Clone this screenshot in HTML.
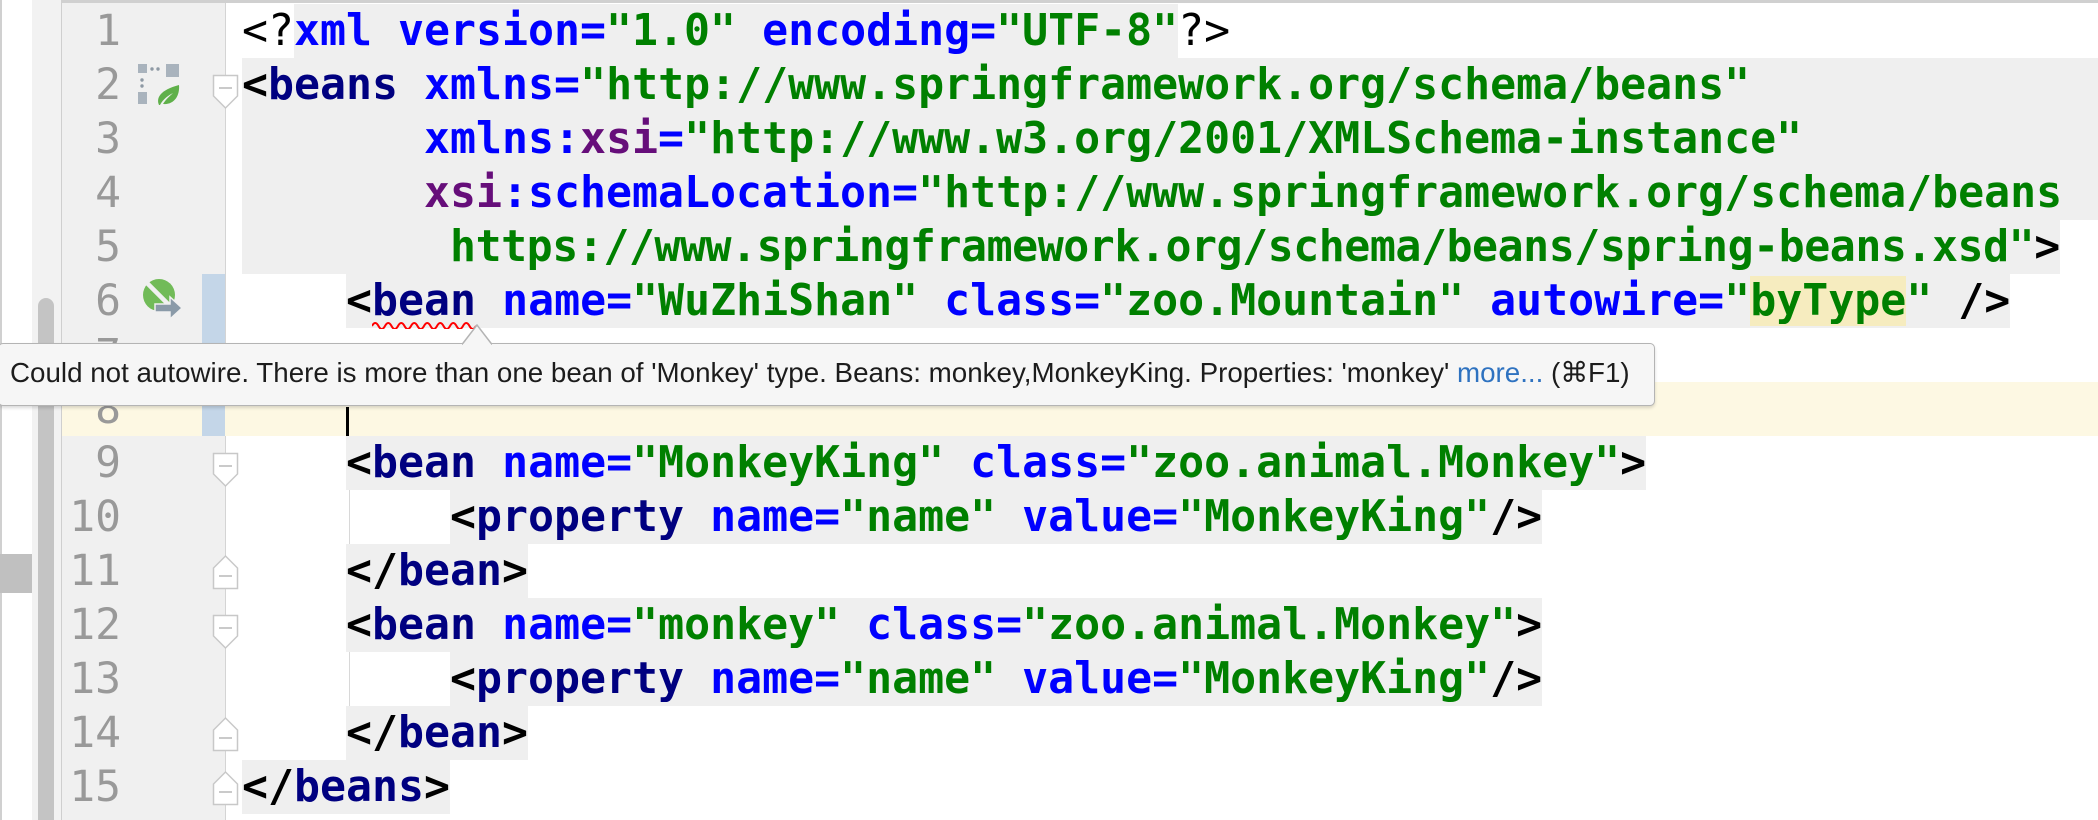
<!DOCTYPE html>
<html><head><meta charset="utf-8">
<style>
html,body{margin:0;padding:0}
body{width:2098px;height:820px;overflow:hidden;background:#fff;position:relative;font-family:"DejaVu Sans Mono","Liberation Mono",monospace}
.abs{position:absolute}
.ln{position:absolute;left:62px;width:59px;text-align:right;font-size:43px;line-height:54px;color:#999;font-family:"DejaVu Sans Mono",monospace}
.code{position:absolute;left:242px;font-size:43.2px;line-height:54px;height:54px;white-space:pre;font-weight:bold;color:#000}
.g{background:#efefef;display:inline-block;height:54px;vertical-align:top}
.t{color:#000080}.a{color:#0000ff}.v{color:#008000}.p{color:#660e7a}
.fold{position:absolute;left:212px}
</style></head><body>
<div class="abs" style="left:0;top:0;width:2px;height:820px;background:#d0d0d0"></div>
<div class="abs" style="left:32px;top:0;width:29px;height:820px;background:#f2f2f2"></div>
<div class="abs" style="left:38px;top:298px;width:16px;height:522px;background:#c4c4c4;border-radius:8px 8px 0 0"></div>
<div class="abs" style="left:0;top:554px;width:32px;height:39px;background:#c0c0c0"></div>
<div class="abs" style="left:61px;top:0;width:164px;height:820px;background:#f0f0f0;border-left:1px solid #cfcfcf"></div>
<div class="abs" style="left:225px;top:0;width:1px;height:820px;background:#d4d4d4"></div>
<div class="abs" style="left:61px;top:0;width:2037px;height:3px;background:#d0d0d0"></div>
<div class="abs" style="left:62px;top:382px;width:2036px;height:54px;background:#fdf8e3"></div>
<div class="abs" style="left:202px;top:274px;width:23px;height:162px;background:#c4d6e8"></div>
<div class="abs" style="left:242px;top:58px;width:1856px;height:162px;background:#efefef"></div>
<div class="abs" style="left:349px;top:490px;width:1px;height:54px;background:#d8d8d8"></div>
<div class="abs" style="left:349px;top:652px;width:1px;height:54px;background:#d8d8d8"></div>

<div class="ln" style="top:4px">1</div>
<div class="ln" style="top:58px">2</div>
<div class="ln" style="top:112px">3</div>
<div class="ln" style="top:166px">4</div>
<div class="ln" style="top:220px">5</div>
<div class="ln" style="top:274px">6</div>
<div class="ln" style="top:328px">7</div>
<div class="ln" style="top:382px">8</div>
<div class="ln" style="top:436px">9</div>
<div class="ln" style="top:490px">10</div>
<div class="ln" style="top:544px">11</div>
<div class="ln" style="top:598px">12</div>
<div class="ln" style="top:652px">13</div>
<div class="ln" style="top:706px">14</div>
<div class="ln" style="top:760px">15</div>

<svg class="abs" style="left:136px;top:62px" width="46" height="46" viewBox="0 0 46 46">
<rect x="2" y="2" width="9" height="9" fill="#a9b3bd"/><rect x="30" y="2" width="13" height="13" fill="#a9b3bd"/>
<rect x="2" y="30" width="9" height="12" fill="#a9b3bd"/>
<circle cx="16" cy="7" r="1.7" fill="#8e99a4"/><circle cx="22" cy="7" r="1.7" fill="#8e99a4"/>
<circle cx="6" cy="18" r="1.7" fill="#8e99a4"/><circle cx="6" cy="24" r="1.7" fill="#8e99a4"/>
<path d="M23 43 C20 36 24 28 43 23 C44 34 38 43 27 42 C30 37 34 34 37 31 C33 33 27 37 24 43 Z" fill="#5fb04a"/>
</svg>
<svg class="abs" style="left:140px;top:278px" width="46" height="46" viewBox="0 0 46 46">
<circle cx="19" cy="17" r="16" fill="#71bb58"/>
<path d="M7 5 L31 29" stroke="#f0f0f0" stroke-width="4.5"/>
<path d="M15 26 L30 26 L30 19 L42 30 L30 41 L30 34 L15 34 Z" fill="#8a9aa8" stroke="#f0f0f0" stroke-width="1.5"/>
</svg>

<svg class="fold" style="top:74px" width="28" height="36" viewBox="0 0 28 36"><path d="M1.5 1.5 H25.5 V22 L13.5 34 L1.5 22 Z" fill="#fff" stroke="#c8c8c8" stroke-width="1.5"/><path d="M7 14 H20" stroke="#b8b8b8" stroke-width="1.5"/></svg>
<svg class="fold" style="top:452px" width="28" height="36" viewBox="0 0 28 36"><path d="M1.5 1.5 H25.5 V22 L13.5 34 L1.5 22 Z" fill="#fff" stroke="#c8c8c8" stroke-width="1.5"/><path d="M7 14 H20" stroke="#b8b8b8" stroke-width="1.5"/></svg>
<svg class="fold" style="top:614px" width="28" height="36" viewBox="0 0 28 36"><path d="M1.5 1.5 H25.5 V22 L13.5 34 L1.5 22 Z" fill="#fff" stroke="#c8c8c8" stroke-width="1.5"/><path d="M7 14 H20" stroke="#b8b8b8" stroke-width="1.5"/></svg>
<svg class="fold" style="top:554px" width="28" height="36" viewBox="0 0 28 36"><path d="M1.5 34.5 H25.5 V14 L13.5 2 L1.5 14 Z" fill="#fff" stroke="#c8c8c8" stroke-width="1.5"/><path d="M7 22 H20" stroke="#b8b8b8" stroke-width="1.5"/></svg>
<svg class="fold" style="top:716px" width="28" height="36" viewBox="0 0 28 36"><path d="M1.5 34.5 H25.5 V14 L13.5 2 L1.5 14 Z" fill="#fff" stroke="#c8c8c8" stroke-width="1.5"/><path d="M7 22 H20" stroke="#b8b8b8" stroke-width="1.5"/></svg>
<svg class="fold" style="top:770px" width="28" height="36" viewBox="0 0 28 36"><path d="M1.5 34.5 H25.5 V14 L13.5 2 L1.5 14 Z" fill="#fff" stroke="#c8c8c8" stroke-width="1.5"/><path d="M7 22 H20" stroke="#b8b8b8" stroke-width="1.5"/></svg>

<div class="code" style="top:4px;font-weight:normal">&lt;?<span class="g" style="font-weight:bold"><span class="a">xml version=</span><span class="v">"1.0"</span> <span class="a">encoding=</span><span class="v">"UTF-8"</span></span>?&gt;</div>
<div class="code" style="top:58px">&lt;<span class="t">beans</span> <span class="a">xmlns=</span><span class="v">"http://www.springframework.org/schema/beans"</span></div>
<div class="code" style="top:112px">       <span class="a">xmlns:</span><span class="p">xsi</span><span class="a">=</span><span class="v">"http://www.w3.org/2001/XMLSchema-instance"</span></div>
<div class="code" style="top:166px">       <span class="p">xsi</span><span class="a">:schemaLocation=</span><span class="v">"http://www.springframework.org/schema/beans</span></div>
<div class="code" style="top:220px"><span class="g">        <span class="v" style="letter-spacing:-0.45px">https://www.springframework.org/schema/beans/spring-beans.xsd"</span>&gt;</span></div>
<div class="code" style="top:274px">    <span class="g">&lt;<span class="t">bean</span> <span class="a">name=</span><span class="v">"WuZhiShan"</span> <span class="a">class=</span><span class="v">"zoo.Mountain"</span> <span class="a">autowire=</span><span class="v">"<span style="background:#f6ecbf">byType</span>"</span> /&gt;</span></div>
<div class="code" style="top:436px">    <span class="g">&lt;<span class="t">bean</span> <span class="a">name=</span><span class="v">"MonkeyKing"</span> <span class="a">class=</span><span class="v">"zoo.animal.Monkey"</span>&gt;</span></div>
<div class="code" style="top:490px">        <span class="g">&lt;<span class="t">property</span> <span class="a">name=</span><span class="v">"name"</span> <span class="a">value=</span><span class="v">"MonkeyKing"</span>/&gt;</span></div>
<div class="code" style="top:544px">    <span class="g">&lt;/<span class="t">bean</span>&gt;</span></div>
<div class="code" style="top:598px">    <span class="g">&lt;<span class="t">bean</span> <span class="a">name=</span><span class="v">"monkey"</span> <span class="a">class=</span><span class="v">"zoo.animal.Monkey"</span>&gt;</span></div>
<div class="code" style="top:652px">        <span class="g">&lt;<span class="t">property</span> <span class="a">name=</span><span class="v">"name"</span> <span class="a">value=</span><span class="v">"MonkeyKing"</span>/&gt;</span></div>
<div class="code" style="top:706px">    <span class="g">&lt;/<span class="t">bean</span>&gt;</span></div>
<div class="code" style="top:760px"><span class="g">&lt;/<span class="t">beans</span>&gt;</span></div>

<svg class="abs" style="left:372px;top:319px" width="106" height="10" viewBox="0 0 106 10"><path d="M0 7 Q3.25 1 6.5 7 T13 7 T19.5 7 T26 7 T32.5 7 T39 7 T45.5 7 T52 7 T58.5 7 T65 7 T71.5 7 T78 7 T84.5 7 T91 7 T97.5 7 T104 7" fill="none" stroke="#f00" stroke-width="2"/></svg>
<div class="abs" style="left:346px;top:407px;width:3px;height:29px;background:#000"></div>

<div class="abs" style="left:-2px;top:343px;width:1655px;height:61px;background:#f6f6f6;border:1.5px solid #b4b4b4;border-radius:5px;box-shadow:0 2px 3px rgba(0,0,0,0.15)"></div>
<svg class="abs" style="left:462px;top:324px" width="30" height="22" viewBox="0 0 30 22"><path d="M0 20.5 L15 1 L30 20.5" fill="#f6f6f6" stroke="#b4b4b4" stroke-width="1.5"/><rect x="1" y="20" width="28" height="3" fill="#f6f6f6"/></svg>
<div id="tt" class="abs" style="left:10px;top:356px;white-space:nowrap;font-family:'Liberation Sans',Arial,sans-serif;font-size:25.5px;line-height:34px;color:#1c1c1c">Could not autowire. There is more than one bean of 'Monkey' type. Beans: monkey,MonkeyKing. Properties: 'monkey' <span style="color:#2e72c0">more...</span> (⌘F1)</div>
<script>
(function(){var e=document.getElementById('tt');var w=e.getBoundingClientRect().width;if(w>0){var fs=25.5*1620/w;e.style.fontSize=fs+'px';}})();
</script>
</body></html>
